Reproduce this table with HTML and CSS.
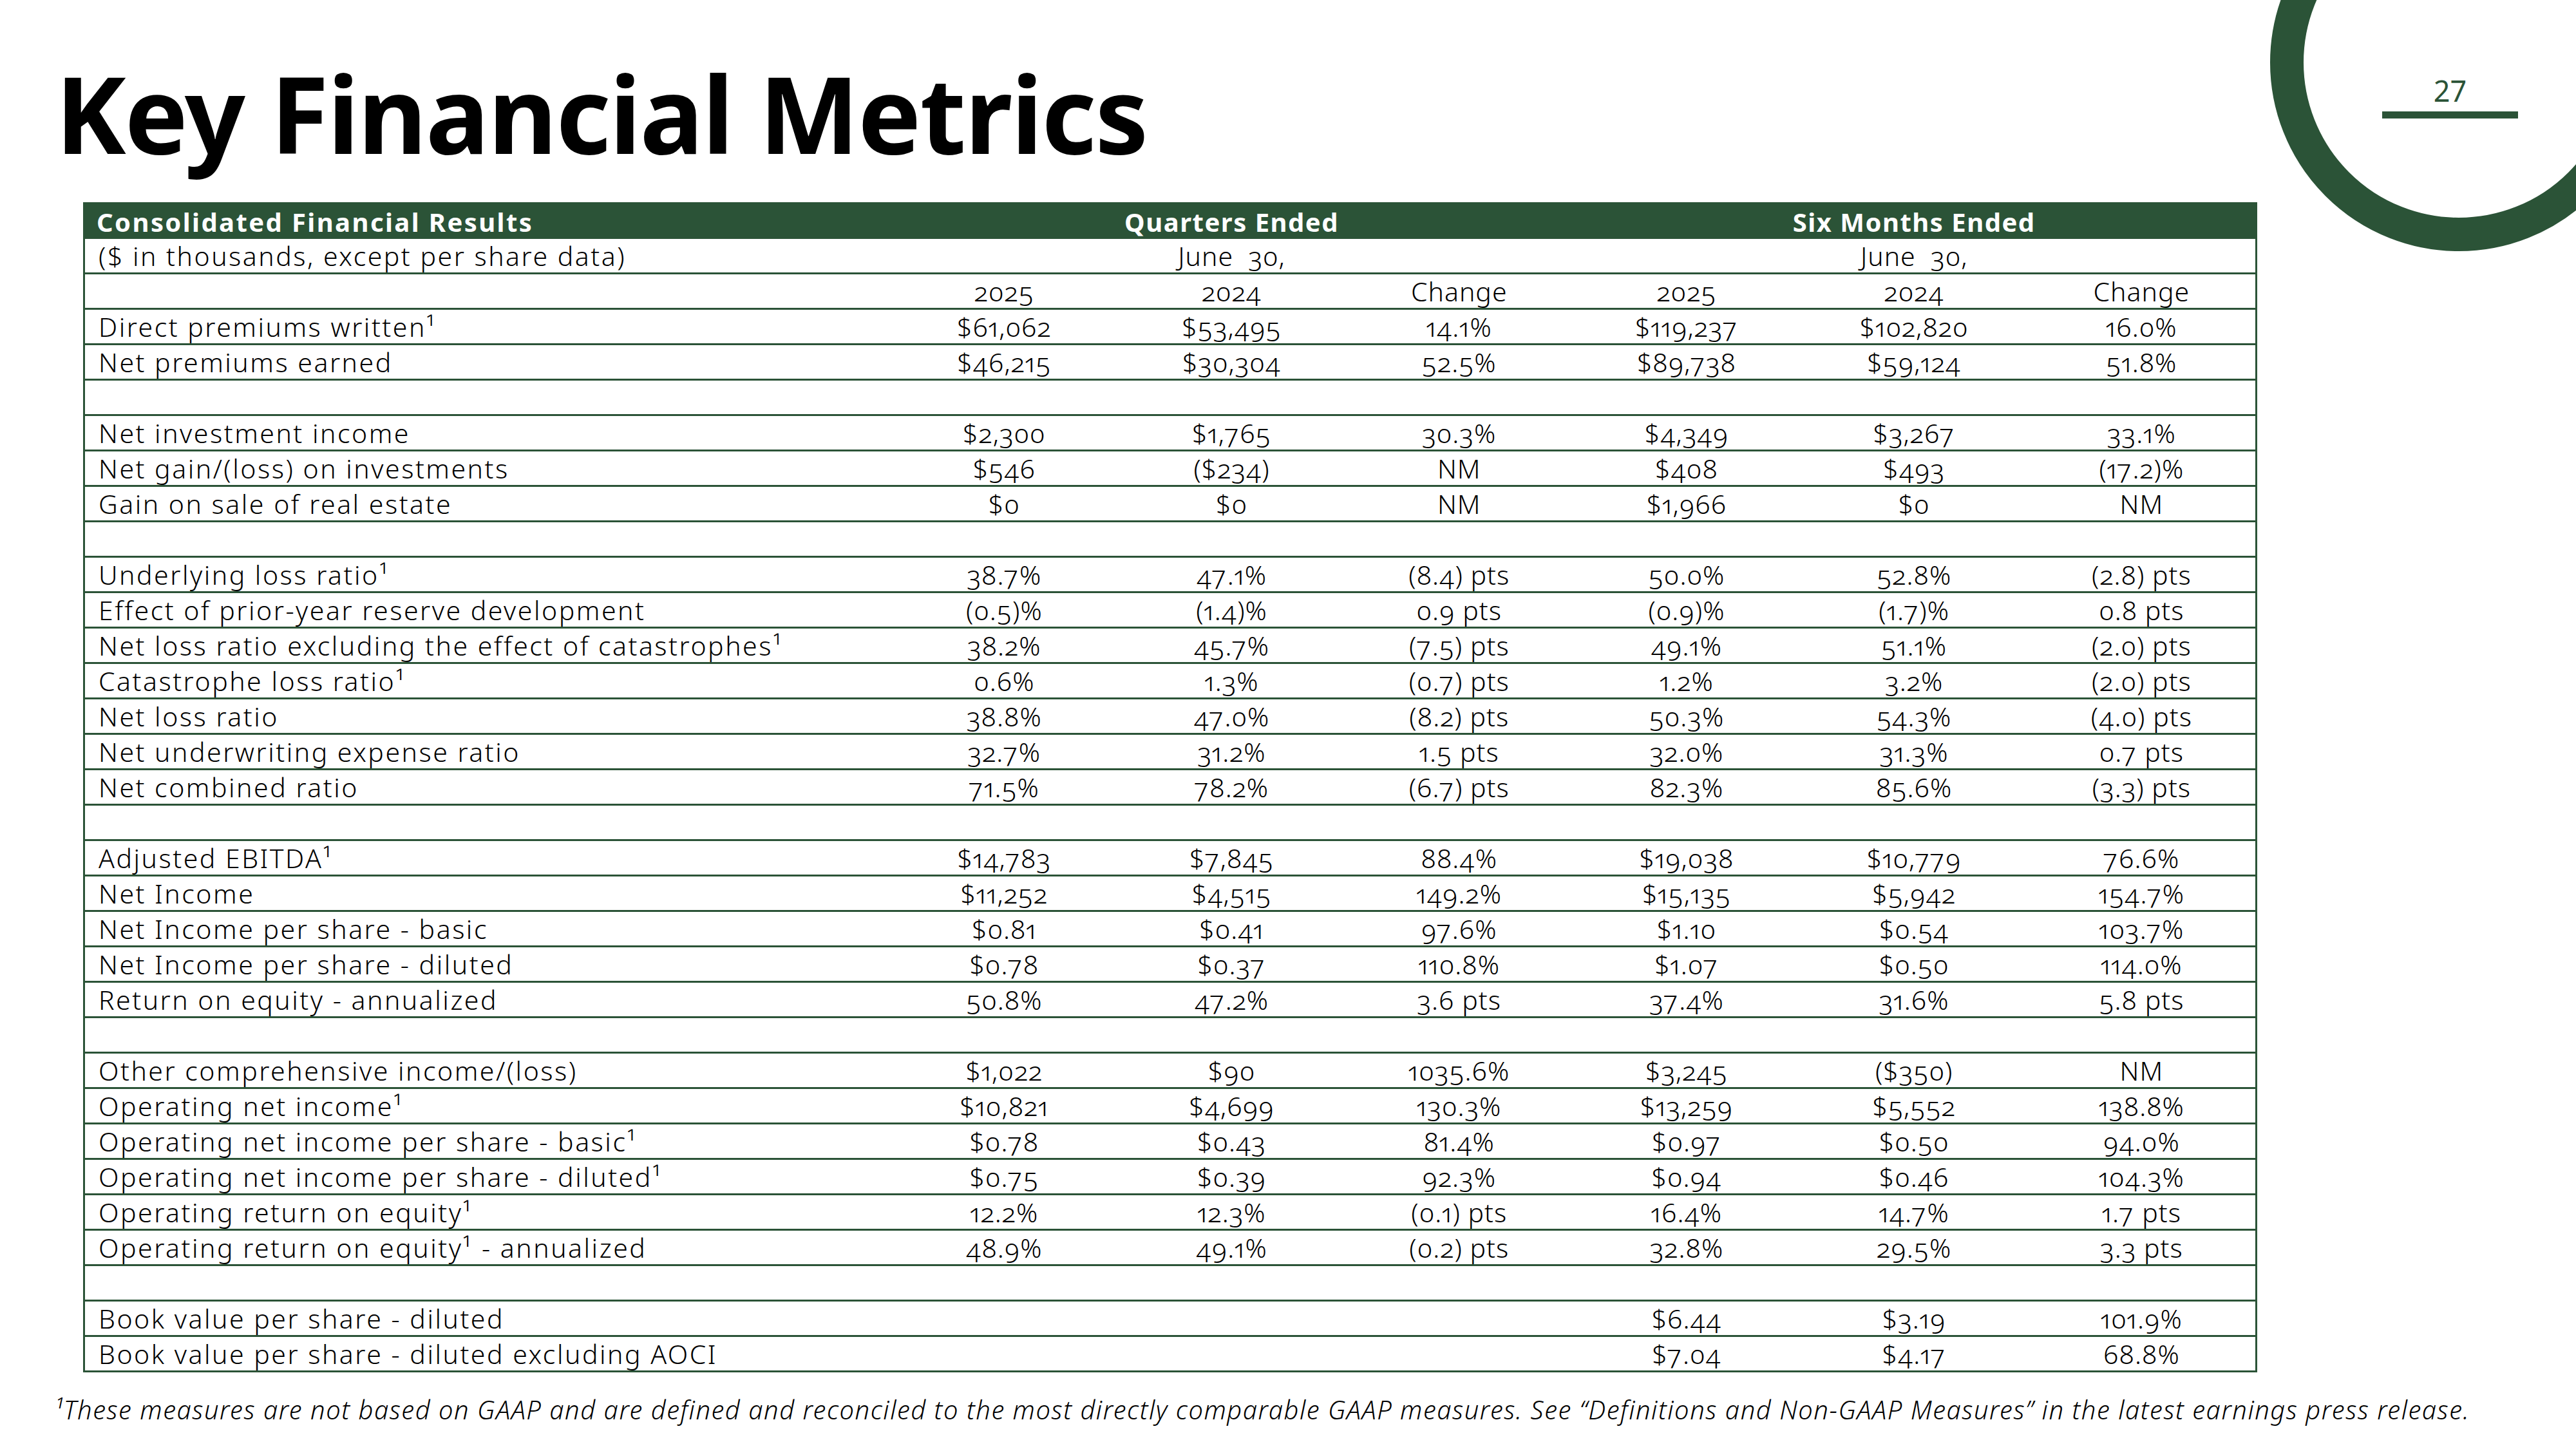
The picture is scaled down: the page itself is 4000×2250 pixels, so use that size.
FILE: index.html
```html
<!DOCTYPE html>
<html lang="en">
<head>
<meta charset="utf-8">
<title>Key Financial Metrics</title>
<link rel="stylesheet" href="styles.css">
</head>
<body>
<div class="slide">
  <div class="ring"></div>
  <div class="pagenum">27</div>
  <h1 class="title">Key Financial Metrics</h1>
  <table class="fin">
    <colgroup>
      <col class="c-label"><col class="c-val"><col class="c-val"><col class="c-val"><col class="c-val"><col class="c-val"><col class="c-val">
    </colgroup>
    <thead>
      <tr class="head">
        <td class="label">Consolidated Financial Results</td>
        <td colspan="3">Quarters Ended</td>
        <td colspan="3">Six Months Ended</td>
      </tr>
    </thead>
    <tbody>
      <tr><td class="label">($ in thousands, except per share data)</td><td colspan="3">June&nbsp; 30,</td><td colspan="3">June&nbsp; 30,</td></tr>
      <tr><td class="label"></td><td>2025</td><td>2024</td><td>Change</td><td>2025</td><td>2024</td><td>Change</td></tr>
      <tr><td class="label">Direct premiums written¹</td><td>$61,062</td><td>$53,495</td><td>14.1%</td><td>$119,237</td><td>$102,820</td><td>16.0%</td></tr>
      <tr><td class="label">Net premiums earned</td><td>$46,215</td><td>$30,304</td><td>52.5%</td><td>$89,738</td><td>$59,124</td><td>51.8%</td></tr>
      <tr><td class="label"></td><td></td><td></td><td></td><td></td><td></td><td></td></tr>
      <tr><td class="label">Net investment income</td><td>$2,300</td><td>$1,765</td><td>30.3%</td><td>$4,349</td><td>$3,267</td><td>33.1%</td></tr>
      <tr><td class="label">Net gain/(loss) on investments</td><td>$546</td><td>($234)</td><td>NM</td><td>$408</td><td>$493</td><td>(17.2)%</td></tr>
      <tr><td class="label">Gain on sale of real estate</td><td>$0</td><td>$0</td><td>NM</td><td>$1,966</td><td>$0</td><td>NM</td></tr>
      <tr><td class="label"></td><td></td><td></td><td></td><td></td><td></td><td></td></tr>
      <tr><td class="label">Underlying loss ratio¹</td><td>38.7%</td><td>47.1%</td><td>(8.4) pts</td><td>50.0%</td><td>52.8%</td><td>(2.8) pts</td></tr>
      <tr><td class="label">Effect of prior-year reserve development</td><td>(0.5)%</td><td>(1.4)%</td><td>0.9 pts</td><td>(0.9)%</td><td>(1.7)%</td><td>0.8 pts</td></tr>
      <tr><td class="label">Net loss ratio excluding the effect of catastrophes¹</td><td>38.2%</td><td>45.7%</td><td>(7.5) pts</td><td>49.1%</td><td>51.1%</td><td>(2.0) pts</td></tr>
      <tr><td class="label">Catastrophe loss ratio¹</td><td>0.6%</td><td>1.3%</td><td>(0.7) pts</td><td>1.2%</td><td>3.2%</td><td>(2.0) pts</td></tr>
      <tr><td class="label">Net loss ratio</td><td>38.8%</td><td>47.0%</td><td>(8.2) pts</td><td>50.3%</td><td>54.3%</td><td>(4.0) pts</td></tr>
      <tr><td class="label">Net underwriting expense ratio</td><td>32.7%</td><td>31.2%</td><td>1.5 pts</td><td>32.0%</td><td>31.3%</td><td>0.7 pts</td></tr>
      <tr><td class="label">Net combined ratio</td><td>71.5%</td><td>78.2%</td><td>(6.7) pts</td><td>82.3%</td><td>85.6%</td><td>(3.3) pts</td></tr>
      <tr><td class="label"></td><td></td><td></td><td></td><td></td><td></td><td></td></tr>
      <tr><td class="label">Adjusted EBITDA¹</td><td>$14,783</td><td>$7,845</td><td>88.4%</td><td>$19,038</td><td>$10,779</td><td>76.6%</td></tr>
      <tr><td class="label">Net Income</td><td>$11,252</td><td>$4,515</td><td>149.2%</td><td>$15,135</td><td>$5,942</td><td>154.7%</td></tr>
      <tr><td class="label">Net Income per share - basic</td><td>$0.81</td><td>$0.41</td><td>97.6%</td><td>$1.10</td><td>$0.54</td><td>103.7%</td></tr>
      <tr><td class="label">Net Income per share - diluted</td><td>$0.78</td><td>$0.37</td><td>110.8%</td><td>$1.07</td><td>$0.50</td><td>114.0%</td></tr>
      <tr><td class="label">Return on equity - annualized</td><td>50.8%</td><td>47.2%</td><td>3.6 pts</td><td>37.4%</td><td>31.6%</td><td>5.8 pts</td></tr>
      <tr><td class="label"></td><td></td><td></td><td></td><td></td><td></td><td></td></tr>
      <tr><td class="label">Other comprehensive income/(loss)</td><td>$1,022</td><td>$90</td><td>1035.6%</td><td>$3,245</td><td>($350)</td><td>NM</td></tr>
      <tr><td class="label">Operating net income¹</td><td>$10,821</td><td>$4,699</td><td>130.3%</td><td>$13,259</td><td>$5,552</td><td>138.8%</td></tr>
      <tr><td class="label">Operating net income per share - basic¹</td><td>$0.78</td><td>$0.43</td><td>81.4%</td><td>$0.97</td><td>$0.50</td><td>94.0%</td></tr>
      <tr><td class="label">Operating net income per share - diluted¹</td><td>$0.75</td><td>$0.39</td><td>92.3%</td><td>$0.94</td><td>$0.46</td><td>104.3%</td></tr>
      <tr><td class="label">Operating return on equity¹</td><td>12.2%</td><td>12.3%</td><td>(0.1) pts</td><td>16.4%</td><td>14.7%</td><td>1.7 pts</td></tr>
      <tr><td class="label">Operating return on equity¹ - annualized</td><td>48.9%</td><td>49.1%</td><td>(0.2) pts</td><td>32.8%</td><td>29.5%</td><td>3.3 pts</td></tr>
      <tr><td class="label"></td><td></td><td></td><td></td><td></td><td></td><td></td></tr>
      <tr><td class="label">Book value per share - diluted</td><td></td><td></td><td></td><td>$6.44</td><td>$3.19</td><td>101.9%</td></tr>
      <tr><td class="label">Book value per share - diluted excluding AOCI</td><td></td><td></td><td></td><td>$7.04</td><td>$4.17</td><td>68.8%</td></tr>
    </tbody>
  </table>
  <p class="note">¹These measures are not based on GAAP and are defined and reconciled to the most directly comparable GAAP measures. See “Definitions and Non-GAAP Measures” in the latest earnings press release.</p>
</div>
</body>
</html>
```

FILE: styles.css
```css
html, body {
  margin: 0;
  padding: 0;
  background: #ffffff;
  overflow: hidden;
}

.slide {
  position: relative;
  width: 4000px;
  height: 2250px;
  overflow: hidden;
  font-family: "Noto Sans", "Open Sans", sans-serif;
  font-variant-numeric: oldstyle-nums proportional-nums;
  color: #000;
  padding-top: 93px;
  box-sizing: border-box;
}

.ring {
  position: absolute;
  left: 3525px;
  top: -196px;
  width: 586px;
  height: 586px;
  box-sizing: border-box;
  border: 52px solid #2b5337;
  border-radius: 50%;
}

.pagenum {
  position: absolute;
  left: 3699px;
  top: 118px;
  width: 211px;
  text-align: center;
  font-size: 45px;
  line-height: 45px;
  padding-bottom: 10px;
  border-bottom: 11px solid #2b5337;
  color: #2b5337;
  font-variant-numeric: lining-nums;
}

.title {
  margin: 0 0 56px 0;
  padding-left: 86px;
  font-size: 165px;
  line-height: 165px;
  font-weight: 700;
  letter-spacing: -2px;
}

.fin {
  margin-left: 129px;
  width: 3376px;
  table-layout: fixed;
  border-collapse: separate;
  border-spacing: 0;
  border-left: 3px solid #2b5337;
  border-right: 3px solid #2b5337;
}

.c-label { width: 1250px; }
.c-val { width: 353px; }

.fin td {
  height: 52px;
  padding: 0;
  font-size: 41px;
  font-weight: 300;
  line-height: 52px;
  letter-spacing: 1px;
  text-align: center;
  white-space: nowrap;
  border-bottom: 3px solid #2b5337;
  overflow: visible;
}

.fin td.label {
  text-align: left;
  padding-left: 21px;
  letter-spacing: 2.5px;
}

.fin .head td {
  background: #2b5337;
  color: #ffffff;
  font-size: 40px;
  font-weight: 700;
  height: 52px;
  padding-top: 5px;
  border-bottom: 0;
  letter-spacing: 1.5px;
}

.fin .head td.label {
  padding-left: 18px;
  letter-spacing: 2.4px;
}

.note {
  margin: 35px 0 0 0;
  padding-left: 84px;
  font-size: 40px;
  font-weight: 300;
  line-height: 46px;
  font-style: italic;
  letter-spacing: 1.5px;
  white-space: nowrap;
}
```
